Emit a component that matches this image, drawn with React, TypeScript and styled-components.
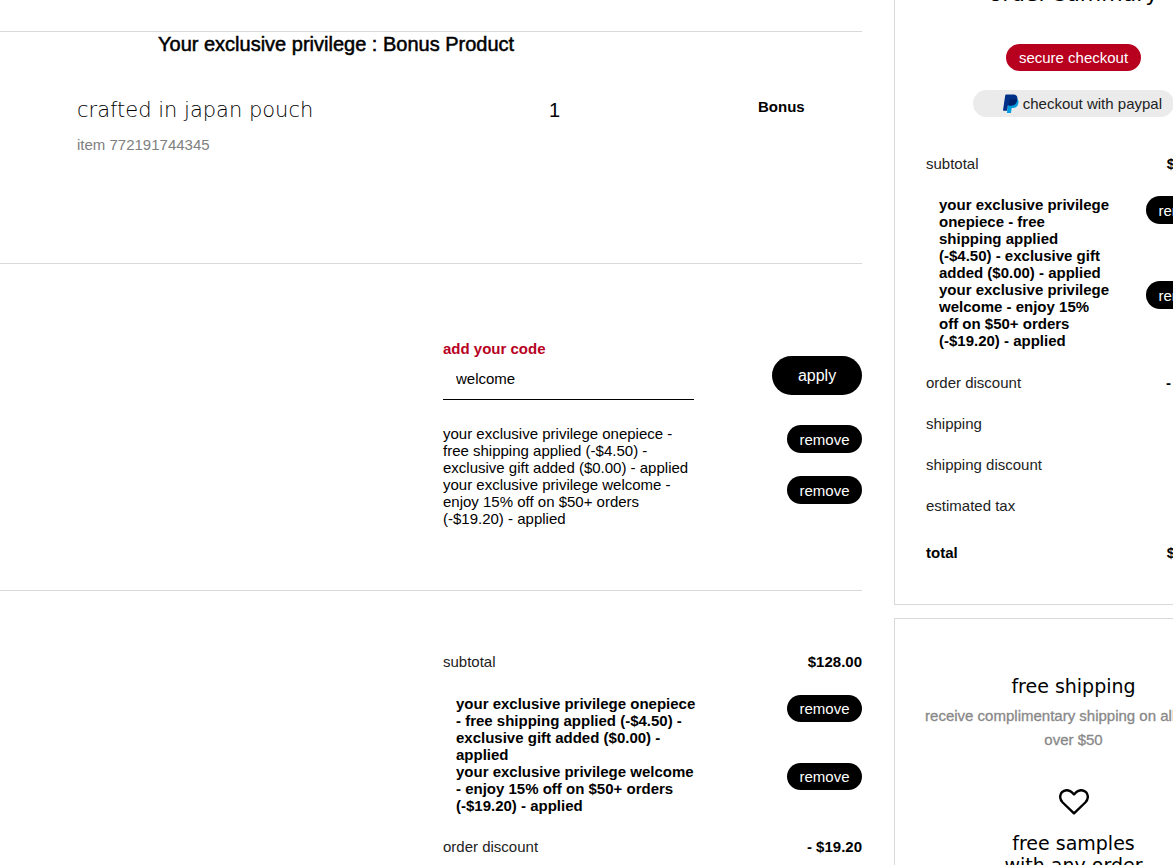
import React from "react";
import styled, { createGlobalStyle } from "styled-components";

const wideFont = `"DejaVu Sans", Verdana, sans-serif`;

const GlobalStyle = createGlobalStyle`
  *, *::before, *::after { box-sizing: border-box; }
  body {
    margin: 0;
    overflow: hidden;
    background: #fff;
    color: #000;
    font-family: "Liberation Sans", Arial, sans-serif;
    font-size: 15px;
    line-height: 17px;
  }
  h1, h2, h3, p, ul, dl, dt, dd { margin: 0; padding: 0; }
  ul { list-style: none; }
`;

const Page = styled.div`
  display: grid;
  grid-template-columns: minmax(0, 1fr) 359px;
  column-gap: 32px;
  height: 100vh;
  margin-right: -80px;
  overflow: hidden;
`;

const Main = styled.main`
  padding-top: 31px;
`;

const Section = styled.section`
  border-top: 1px solid #d9d9d9;
`;

const BonusSection = styled(Section)`
  height: 232px;
`;

const BonusTitle = styled.h2`
  padding-left: 158px;
  font-size: 20px;
  line-height: 24px;
  font-weight: 400;
  -webkit-text-stroke: 0.5px #000;
`;

const Product = styled.div`
  display: grid;
  grid-template-columns: 472px 209px 1fr;
  padding: 40px 0 0 77px;
`;

const ProductName = styled.h3`
  font-family: ${wideFont};
  font-size: 21px;
  line-height: 28px;
  font-weight: 200;
`;

const ItemNumber = styled.p`
  margin-top: 12px;
  color: #808080;
`;

const Quantity = styled.span`
  font-size: 20px;
  line-height: 28px;
`;

const Strong = styled.strong`
  line-height: 22px;
`;

const CodeSection = styled(Section)`
  height: 327px;
  padding: 76px 0 0 443px;
`;

const CodeForm = styled.form`
  display: flex;
  justify-content: space-between;
  margin-bottom: 25px;
`;

const Field = styled.div`
  width: 251px;
`;

const FieldLabel = styled.label`
  display: block;
  color: #b8001f;
  font-weight: 700;
`;

const CodeInput = styled.input`
  display: block;
  width: 100%;
  height: 43px;
  padding: 0 13px;
  border: 0;
  border-bottom: 1px solid #000;
  background: transparent;
  color: #000;
  font: inherit;
  outline: none;
`;

const Pill = styled.button`
  flex: none;
  height: 28px;
  padding: 0 13px;
  border: 0;
  border-radius: 14px;
  background: #000;
  color: #fff;
  font: inherit;
  white-space: nowrap;
`;

const RemoveButton = styled(Pill)`
  width: 75px;
  padding: 0;
`;

const ApplyButton = styled(Pill)`
  width: 90px;
  height: 39px;
  margin-top: 16px;
  border-radius: 20px;
  font-size: 16px;
`;

const CouponRow = styled.li`
  display: flex;
  justify-content: space-between;
`;

const CouponText = styled.p<{ $bold?: boolean }>`
  padding-left: ${(p) => (p.$bold ? "13px" : "0")};
  font-weight: ${(p) => (p.$bold ? 700 : 400)};
  white-space: pre-line;
`;

const CouponList = styled.ul`
  padding-bottom: 1px;
`;

const TotalsSection = styled(Section)`
  padding: 62px 0 0 443px;

  ${CouponList} {
    padding: 1px 0 0;
  }

  ${RemoveButton} {
    height: 27px;
  }
`;

const Totals = styled.div`
  display: flex;
  flex-direction: column;
  gap: 24px;
`;

const TotalRow = styled.div<{ $total?: boolean }>`
  display: flex;
  justify-content: space-between;
  color: ${(p) => (p.$total ? "#000" : "#222")};
  font-weight: ${(p) => (p.$total ? 700 : 400)};
  padding-top: ${(p) => (p.$total ? "6px" : "0")};
`;

const Amount = styled.strong`
  color: #000;
`;

const Sidebar = styled.aside`
  display: flex;
  flex-direction: column;
  gap: 13px;
  margin-top: -51px;
`;

const Card = styled.section`
  border: 1px solid #d9d9d9;
  padding: 30px 31px 43px;
`;

const SummaryTitle = styled.h2`
  font-family: ${wideFont};
  font-size: 22px;
  line-height: 28px;
  font-weight: 400;
  text-align: center;
`;

const Actions = styled.div`
  display: flex;
  flex-direction: column;
  align-items: center;
  gap: 19px;
  margin: 36px 0 38px;
`;

const SecureButton = styled(Pill)`
  height: 27px;
  background: #b8001f;
`;

const PaypalButton = styled(Pill)`
  display: flex;
  align-items: center;
  justify-content: flex-end;
  gap: 4px;
  width: 201px;
  height: 27px;
  padding-right: 12px;
  background: #ebebeb;
  color: #222;
`;

const PerksCard = styled(Card)`
  padding: 56px 20px;
  text-align: center;
`;

const PerkTitle = styled.h3`
  font-family: ${wideFont};
  font-size: 19px;
  line-height: 22px;
  font-weight: 400;
`;

const PerkText = styled.p`
  margin: 7px 0 37px;
  color: #888;
  line-height: 24px;
  -webkit-text-stroke: 0.3px #888;
`;

const HeartIcon = styled.svg`
  display: block;
  margin: 0 auto 17px;
`;

function Coupons({ texts, bold }: { texts: string[]; bold?: boolean }) {
  return (
    <CouponList>
      {texts.map((text) => (
        <CouponRow key={text}>
          <CouponText $bold={bold}>{text}</CouponText>
          <RemoveButton type="button">remove</RemoveButton>
        </CouponRow>
      ))}
    </CouponList>
  );
}

function PaypalIcon() {
  return (
    <svg width="16" height="20" viewBox="0 0 16 20" aria-hidden="true">
      <path
        d="M13.600 4.800c1.800.9 2.200 2.600 1.700 4.600-.7 3.100-2.800 4.500-5.800 4.500h-.8l-.8 5.200H3.900L5.500 6z"
        fill="#009cde"
      />
      <path
        d="M2.200 1.400c.1-.6.500-.9 1-.9h6.600c3.400 0 5.100 1.600 4.500 4.900-.7 4-3.200 5.600-6.700 5.600H5.700c-.5 0-.8.2-.9.700l-.8 5H.400c-.3 0-.4-.2-.4-.5z"
        fill="#003087"
      />
      <path
        d="M14 5c.2.700.1 1.500-.1 2.300-.9 3.200-3.100 4.500-6.300 4.500H5.700L6.700 6c.1-.5.400-.8.900-.8h4.600c.7 0 1.300-.1 1.800-.2z"
        fill="#012169"
      />
    </svg>
  );
}

const codeCoupons = [
  "your exclusive privilege onepiece -\nfree shipping applied (-$4.50) -\nexclusive gift added ($0.00) - applied",
  "your exclusive privilege welcome -\nenjoy 15% off on $50+ orders\n(-$19.20) - applied",
];

const totalsCoupons = [
  "your exclusive privilege onepiece\n- free shipping applied (-$4.50) -\nexclusive gift added ($0.00) -\napplied",
  "your exclusive privilege welcome\n- enjoy 15% off on $50+ orders\n(-$19.20) - applied",
];

const summaryCoupons = [
  "your exclusive privilege\nonepiece - free\nshipping applied\n(-$4.50) - exclusive gift\nadded ($0.00) - applied",
  "your exclusive privilege\nwelcome - enjoy 15%\noff on $50+ orders\n(-$19.20) - applied",
];

export default function App() {
  return (
    <>
      <GlobalStyle />
      <Page>
        <Main>
          <BonusSection>
            <BonusTitle>Your exclusive privilege : Bonus Product</BonusTitle>
            <Product>
              <div>
                <ProductName>crafted in japan pouch</ProductName>
                <ItemNumber>item 772191744345</ItemNumber>
              </div>
              <Quantity>1</Quantity>
              <Strong>Bonus</Strong>
            </Product>
          </BonusSection>
          <CodeSection>
            <CodeForm onSubmit={(e) => e.preventDefault()}>
              <Field>
                <FieldLabel htmlFor="code">add your code</FieldLabel>
                <CodeInput id="code" defaultValue="welcome" />
              </Field>
              <ApplyButton type="submit">apply</ApplyButton>
            </CodeForm>
            <Coupons texts={codeCoupons} />
          </CodeSection>
          <TotalsSection>
            <Totals>
              <TotalRow>
                <span>subtotal</span>
                <Amount>$128.00</Amount>
              </TotalRow>
              <Coupons texts={totalsCoupons} bold />
              <TotalRow>
                <span>order discount</span>
                <Amount>- $19.20</Amount>
              </TotalRow>
            </Totals>
          </TotalsSection>
        </Main>
        <Sidebar>
          <Card>
            <SummaryTitle>order summary</SummaryTitle>
            <Actions>
              <SecureButton type="button">secure checkout</SecureButton>
              <PaypalButton type="button">
                <PaypalIcon />
                checkout with paypal
              </PaypalButton>
            </Actions>
            <Totals>
              <TotalRow>
                <span>subtotal</span>
                <Amount>$128.00</Amount>
              </TotalRow>
              <Coupons texts={summaryCoupons} bold />
              <TotalRow>
                <span>order discount</span>
                <Amount>- $19.20</Amount>
              </TotalRow>
              <TotalRow>shipping</TotalRow>
              <TotalRow>shipping discount</TotalRow>
              <TotalRow>estimated tax</TotalRow>
              <TotalRow $total>
                <span>total</span>
                <Amount>$108.80</Amount>
              </TotalRow>
            </Totals>
          </Card>
          <PerksCard>
            <PerkTitle>free shipping</PerkTitle>
            <PerkText>
              receive complimentary shipping on all orders
              <br />
              over $50
            </PerkText>
            <HeartIcon width="30" height="26" viewBox="0 0 30 26" aria-hidden="true">
              <path
                d="M15 24.400L3.700 13.500C.4 10.100.5 5.800 3 3.200c2.700-2.700 7-2.700 9.700 0L15 5.500l2.300-2.300c2.700-2.700 7-2.700 9.700 0 2.500 2.600 2.600 6.900-.7 10.300z"
                fill="none"
                stroke="#000"
                strokeWidth="2.400"
                strokeLinejoin="round"
              />
            </HeartIcon>
            <PerkTitle>
              free samples
              <br />
              with any order
            </PerkTitle>
          </PerksCard>
        </Sidebar>
      </Page>
    </>
  );
}
